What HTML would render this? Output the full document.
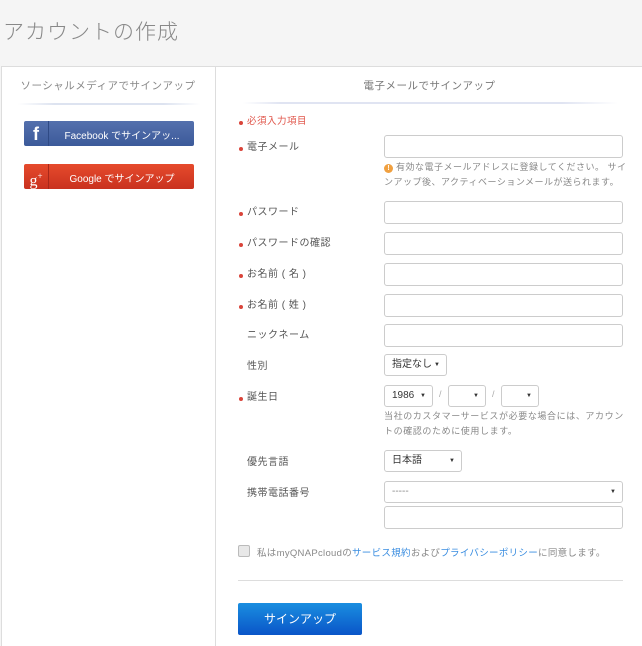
<!DOCTYPE html>
<html><head><meta charset="utf-8"><style>
*{box-sizing:border-box;margin:0;padding:0}
body{width:642px;height:639px;overflow:hidden;background:#f5f5f5;font-family:"Liberation Sans","Noto Sans CJK JP",sans-serif;position:relative;color:#555}
.a{position:absolute}
.lbl{position:absolute;left:247px;font-size:10px;color:#555;line-height:12px;margin-top:2px;letter-spacing:.5px}
.dot{position:absolute;left:239px;width:4px;height:4px;border-radius:2px;background:#d9443a;margin-top:1px}
.in{position:absolute;left:384px;width:239px;height:23px;border:1px solid #ccc;border-radius:3px;background:#fff}
.sel{position:absolute;height:22px;border:1px solid #ccc;border-radius:3px;background:#fff;font-size:10px;color:#333;padding-left:7px;line-height:20px}
.sel:after{content:"▼";position:absolute;right:6px;top:0;font-size:6px;color:#333}
.hint{position:absolute;left:384px;font-size:9px;color:#888;line-height:15px;width:242px;letter-spacing:.6px;white-space:nowrap}
</style></head><body>
<div class="a" style="left:3px;top:16px;font-size:21px;color:#888;letter-spacing:1px;font-weight:300">アカウントの作成</div>
<div class="a" style="left:1px;top:66px;width:215px;height:580px;background:#fff;border:1px solid #ddd;border-bottom:none"></div>
<div class="a" style="left:216px;top:66px;width:430px;height:580px;background:#fff;border-top:1px solid #ddd"></div>
<div class="a" style="left:0;top:78px;width:216px;text-align:center;font-size:10.5px;color:#888;letter-spacing:.5px">ソーシャルメディアでサインアップ</div>
<div class="a" style="left:18px;top:103px;width:182px;height:2px;background:linear-gradient(90deg,#fff,#dde3f0 20%,#dde3f0 80%,#fff)"></div>
<div class="a" style="left:24px;top:121px;width:170px;height:25px;border-radius:2px;background:linear-gradient(#5470ad,#3c5a9a);color:#fff;font-size:10px">
<div class="a" style="left:0;top:0;width:25px;height:25px;border-right:1px solid #2f4a85;text-align:center;font:bold 18px 'Liberation Sans';line-height:26px">f</div>
<div class="a" style="left:26px;right:0;top:6px;text-align:center">Facebook でサインアッ...</div></div>
<div class="a" style="left:24px;top:164px;width:170px;height:25px;border-radius:2px;background:linear-gradient(#e64a2c,#c9321f);color:#fff;font-size:10px">
<div class="a" style="left:0;top:0;width:25px;height:25px;border-right:1px solid #a8281a;text-align:center;font:16px 'Liberation Serif';line-height:24px">g<sup style="font-size:9px">+</sup></div>
<div class="a" style="left:26px;right:0;top:6px;text-align:center">Google でサインアップ</div></div>
<div class="a" style="left:217px;top:78px;width:425px;text-align:center;font-size:10.5px;color:#777;letter-spacing:.5px">電子メールでサインアップ</div>
<div class="a" style="left:243px;top:102px;width:375px;height:2px;background:linear-gradient(90deg,#fff,#e0e4f2 10%,#e0e4f2 85%,#fff)"></div>
<div class="dot" style="top:120px"></div><div class="lbl" style="top:114px;color:#e0554a;font-size:9.5px">必須入力項目</div>
<div class="dot" style="top:146px"></div><div class="lbl" style="top:140px">電子メール</div>
<div class="in" style="top:135px"></div>
<div class="hint" style="top:160px;letter-spacing:.5px"><span style="display:inline-block;width:9px;height:9px;border-radius:5px;background:#f0a040;color:#fff;font-size:7px;text-align:center;line-height:9px;font-weight:bold;letter-spacing:0">!</span> 有効な電子メールアドレスに登録してください。 サイ<br>ンアップ後、アクティベーションメールが送られます。</div>
<div class="dot" style="top:211px"></div><div class="lbl" style="top:205px">パスワード</div><div class="in" style="top:201px"></div>
<div class="dot" style="top:242px"></div><div class="lbl" style="top:236px">パスワードの確認</div><div class="in" style="top:232px"></div>
<div class="dot" style="top:273px"></div><div class="lbl" style="top:267px">お名前 ( 名 )</div><div class="in" style="top:263px"></div>
<div class="dot" style="top:304px"></div><div class="lbl" style="top:298px">お名前 ( 姓 )</div><div class="in" style="top:294px"></div>
<div class="lbl" style="top:328px">ニックネーム</div><div class="in" style="top:324px"></div>
<div class="lbl" style="top:359px">性別</div><div class="sel" style="left:384px;top:354px;width:63px">指定なし</div>
<div class="dot" style="top:396px"></div><div class="lbl" style="top:390px">誕生日</div>
<div class="sel" style="left:384px;top:385px;width:49px">1986</div>
<div class="a" style="left:439px;top:389px;font-size:9px;color:#aaa">/</div>
<div class="sel" style="left:448px;top:385px;width:38px"></div>
<div class="a" style="left:492px;top:389px;font-size:9px;color:#aaa">/</div>
<div class="sel" style="left:501px;top:385px;width:38px"></div>
<div class="hint" style="top:409px">当社のカスタマーサービスが必要な場合には、アカウン<br>トの確認のために使用します。</div>
<div class="lbl" style="top:455px">優先言語</div><div class="sel" style="left:384px;top:450px;width:78px">日本語</div>
<div class="lbl" style="top:486px">携帯電話番号</div><div class="sel" style="left:384px;top:481px;width:239px;color:#888">-----</div>
<div class="in" style="top:506px"></div>
<div class="a" style="left:238px;top:545px;width:12px;height:12px;border:1px solid #bbb;border-radius:2px;background:#e8e8e8"></div>
<div class="a" style="left:257px;top:545px;font-size:9.5px;color:#888;letter-spacing:.3px">私はmyQNAPcloudの<span style="color:#3a8de0">サービス規約</span>および<span style="color:#3a8de0">プライバシーポリシー</span>に同意します。</div>
<div class="a" style="left:238px;top:580px;width:385px;height:1px;background:#ddd"></div>
<div class="a" style="left:238px;top:603px;width:124px;height:32px;border-radius:2px;background:linear-gradient(#1a8ee0,#0a55c8);color:#fff;font-size:12px;text-align:center;line-height:32px">サインアップ</div>
</body></html>
